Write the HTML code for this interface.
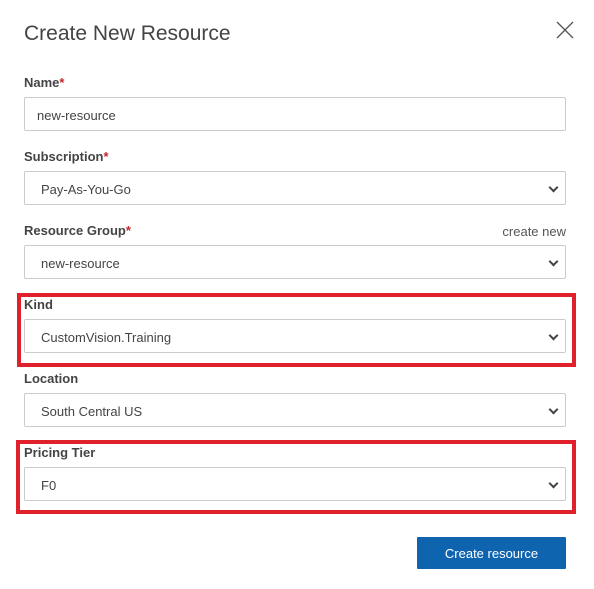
<!DOCTYPE html>
<html><head><style>
*{box-sizing:border-box;margin:0;padding:0}
body{width:594px;height:589px;background:#fff;font-family:"Liberation Sans",sans-serif;position:relative;overflow:hidden;color:#333}
.t{position:absolute;left:24px;top:22px;font-size:21px;color:#444}
.lbl{position:absolute;left:24px;font-size:13px;font-weight:bold;color:#444}
.lbl i{color:#c4262e;font-style:normal}
.in{position:absolute;left:24px;width:542px;height:34px;border:1px solid #ccc;border-radius:2px;font-size:13px;color:#444;line-height:35px;padding-left:16px}
.in.sel::after{content:"";position:absolute;right:8px;top:12px;width:5px;height:5px;border-right:2px solid #444;border-bottom:2px solid #444;transform:rotate(45deg)}
.red{position:absolute;border:4px solid #e0202a}
.btn{position:absolute;left:417px;top:537px;width:149px;height:32px;background:#0f64b0;color:#fff;font-size:13px;text-align:center;line-height:33px;border-radius:1px}
</style></head><body>
<div class="t">Create New Resource</div>
<svg style="position:absolute;left:556px;top:21px" width="18" height="18"><path d="M1 1L17 17M17 1L1 17" stroke="#555" stroke-width="1.3"/></svg>
<div class="lbl" style="top:75px">Name<i>*</i></div>
<div class="in" style="top:97px;padding-left:12px">new-resource</div>
<div class="lbl" style="top:149px">Subscription<i>*</i></div>
<div class="in sel" style="top:171px">Pay-As-You-Go</div>
<div class="lbl" style="top:223px">Resource Group<i>*</i></div>
<div style="position:absolute;right:28px;top:224px;font-size:13px;color:#555">create new</div>
<div class="in sel" style="top:245px">new-resource</div>
<div class="red" style="left:17px;top:293px;width:559px;height:74px"></div>
<div class="lbl" style="top:297px">Kind</div>
<div class="in sel" style="top:319px">CustomVision.Training</div>
<div class="lbl" style="top:371px">Location</div>
<div class="in sel" style="top:393px">South Central US</div>
<div class="red" style="left:16px;top:440px;width:560px;height:74px"></div>
<div class="lbl" style="top:445px">Pricing Tier</div>
<div class="in sel" style="top:467px">F0</div>
<div class="btn">Create resource</div>
</body></html>
